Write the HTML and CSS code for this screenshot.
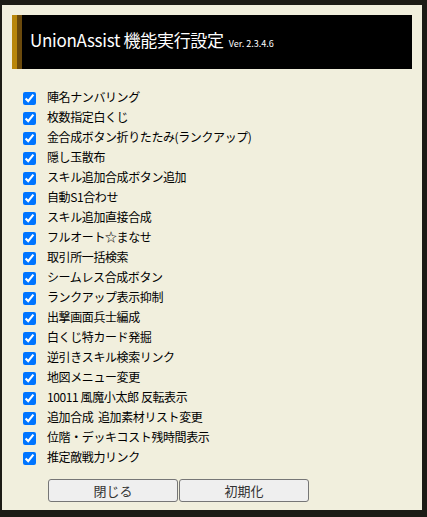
FILE: index.html
```html
<!DOCTYPE html>
<html lang="ja">
<head>
<meta charset="utf-8">
<title>UnionAssist 機能実行設定</title>
<link rel="stylesheet" href="styles.css">
</head>
<body>
<div class="panel">
  <div class="header">
    <span class="title">UnionAssist 機能実行設定</span>
    <span class="ver">Ver. 2.3.4.6</span>
  </div>
  <ul class="options">
    <li><input type="checkbox" checked><span>陣名ナンバリング</span></li>
    <li><input type="checkbox" checked><span>枚数指定白くじ</span></li>
    <li><input type="checkbox" checked><span>金合成ボタン折りたたみ(ランクアップ)</span></li>
    <li><input type="checkbox" checked><span>隠し玉散布</span></li>
    <li><input type="checkbox" checked><span>スキル追加合成ボタン追加</span></li>
    <li><input type="checkbox" checked><span>自動S1合わせ</span></li>
    <li><input type="checkbox" checked><span>スキル追加直接合成</span></li>
    <li><input type="checkbox" checked><span>フルオート☆まなせ</span></li>
    <li><input type="checkbox" checked><span>取引所一括検索</span></li>
    <li><input type="checkbox" checked><span>シームレス合成ボタン</span></li>
    <li><input type="checkbox" checked><span>ランクアップ表示抑制</span></li>
    <li><input type="checkbox" checked><span>出撃画面兵士編成</span></li>
    <li><input type="checkbox" checked><span>白くじ特カード発掘</span></li>
    <li><input type="checkbox" checked><span>逆引きスキル検索リンク</span></li>
    <li><input type="checkbox" checked><span>地図メニュー変更</span></li>
    <li><input type="checkbox" checked><span>10011 風魔小太郎 反転表示</span></li>
    <li><input type="checkbox" checked><span>追加合成&nbsp;&nbsp;追加素材リスト変更</span></li>
    <li><input type="checkbox" checked><span>位階・デッキコスト残時間表示</span></li>
    <li><input type="checkbox" checked><span>推定敵戦力リンク</span></li>
  </ul>
  <div class="buttons">
    <button class="btn">閉じる</button>
    <button class="btn">初期化</button>
  </div>
</div>
</body>
</html>
```

FILE: styles.css
```css
html, body {
  margin: 0;
  padding: 0;
}
body {
  background: #1c1b15;
  width: 427px;
  height: 517px;
  overflow: hidden;
  font-family: "Noto Sans CJK JP", "Noto Sans", sans-serif;
}
.panel {
  margin: 5px 0 0 2px;
  width: 420px;
  height: 505px;
  box-sizing: border-box;
  padding: 10px;
  background: #f1efdd;
}
.header {
  height: 54px;
  box-sizing: border-box;
  background: #000;
  border-left: 5px solid #b8860b;
  box-shadow: inset 5px 0 0 #6b4a0c;
  padding-left: 13px;
  display: flex;
  align-items: baseline;
  padding-top: 15px;
  color: #fff;
}
.title {
  font-size: 17px;
  line-height: 20px;
  letter-spacing: -0.3px;
}
.ver {
  font-size: 9px;
  margin-left: 5px;
}
.options {
  list-style: none;
  margin: 19px 0 0 0;
  padding: 0;
}
.options li {
  height: 20px;
  display: flex;
  align-items: center;
  font-size: 12px;
  color: #000;
}
.options input {
  width: 13px;
  height: 13px;
  margin: 0 11px 0 11px;
  accent-color: #0075ff;
}
.options span {
  line-height: 14px;
  margin-top: -3px;
  letter-spacing: -0.4px;
}
.buttons {
  display: flex;
  gap: 1px;
  margin: 11px 0 0 36px;
}
.btn {
  width: 130px;
  height: 23px;
  margin: 0;
  padding: 0;
  border: 1px solid #767676;
  border-radius: 3px;
  background: #efefef;
  color: #333;
  font-family: "Noto Sans CJK JP", "Noto Sans", sans-serif;
  font-size: 13px;
}
```
